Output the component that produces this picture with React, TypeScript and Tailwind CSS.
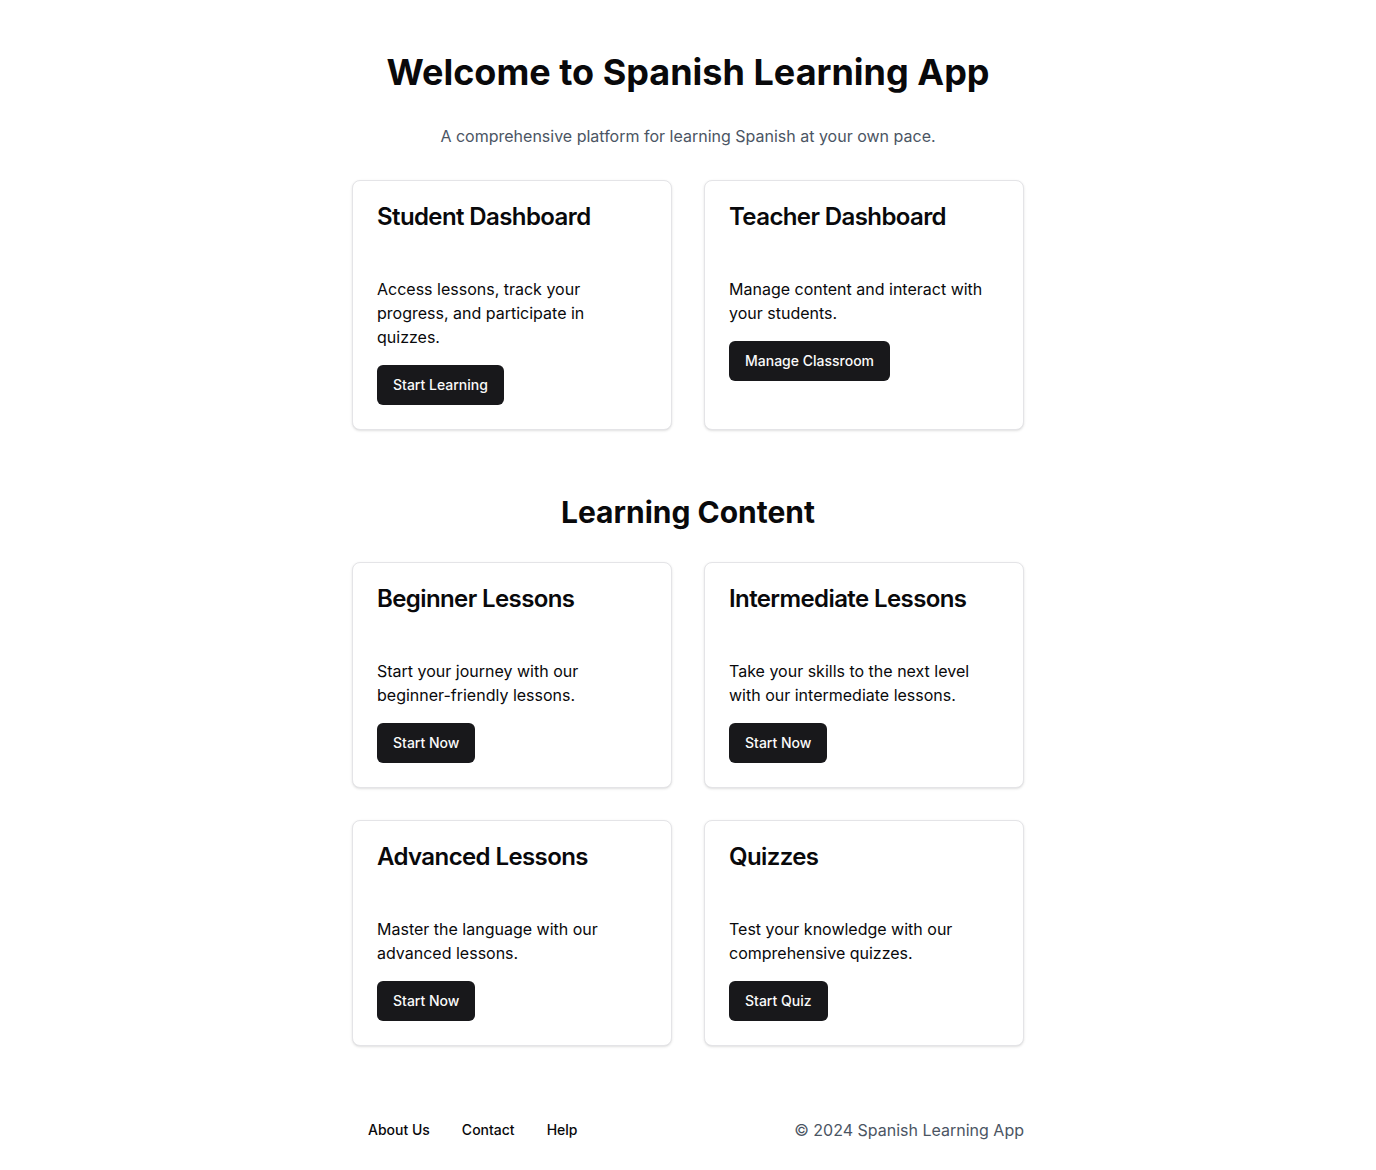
import React from "react";

function Card({ title, desc, action }: { title: string; desc: string; action: string }) {
  return (
    <div className="flex flex-col rounded-lg border border-[#e4e4e7] bg-white p-6 shadow-sm">
      <h3 className="text-2xl font-semibold leading-none tracking-tight text-[#09090b]">{title}</h3>
      <p className="mt-12 mb-4 text-base leading-6 text-[#09090b]">{desc}</p>
      <div>
        <button className="inline-flex h-10 items-center justify-center rounded-md bg-[#18181b] px-4 text-sm font-medium text-[#fafafa]">
          {action}
        </button>
      </div>
    </div>
  );
}

export default function App() {
  return (
    <div className="min-h-screen bg-white font-['Inter',sans-serif] text-[#09090b]">
      <div className="mx-auto max-w-2xl pt-[52px]">
        <h1 className="text-center text-4xl font-bold leading-10">Welcome to Spanish Learning App</h1>
        <p className="mt-8 text-center text-base leading-6 text-[#4b5563]">
          A comprehensive platform for learning Spanish at your own pace.
        </p>
        <div className="mt-8 grid grid-cols-2 gap-8">
          <Card
            title="Student Dashboard"
            desc="Access lessons, track your progress, and participate in quizzes."
            action="Start Learning"
          />
          <Card
            title="Teacher Dashboard"
            desc="Manage content and interact with your students."
            action="Manage Classroom"
          />
        </div>
        <h2 className="mt-16 text-center text-3xl font-bold leading-9">Learning Content</h2>
        <div className="mt-8 grid grid-cols-2 gap-8">
          <Card
            title="Beginner Lessons"
            desc="Start your journey with our beginner-friendly lessons."
            action="Start Now"
          />
          <Card
            title="Intermediate Lessons"
            desc="Take your skills to the next level with our intermediate lessons."
            action="Start Now"
          />
          <Card
            title="Advanced Lessons"
            desc="Master the language with our advanced lessons."
            action="Start Now"
          />
          <Card
            title="Quizzes"
            desc="Test your knowledge with our comprehensive quizzes."
            action="Start Quiz"
          />
        </div>
        <footer className="mt-[72px] flex items-center justify-between pb-7">
          <nav className="flex items-center">
            <a className="px-4 text-sm font-medium leading-5 text-[#09090b]">About Us</a>
            <a className="px-4 text-sm font-medium leading-5 text-[#09090b]">Contact</a>
            <a className="px-4 text-sm font-medium leading-5 text-[#09090b]">Help</a>
          </nav>
          <p className="text-base leading-6 text-[#4b5563]">© 2024 Spanish Learning App</p>
        </footer>
      </div>
    </div>
  );
}
